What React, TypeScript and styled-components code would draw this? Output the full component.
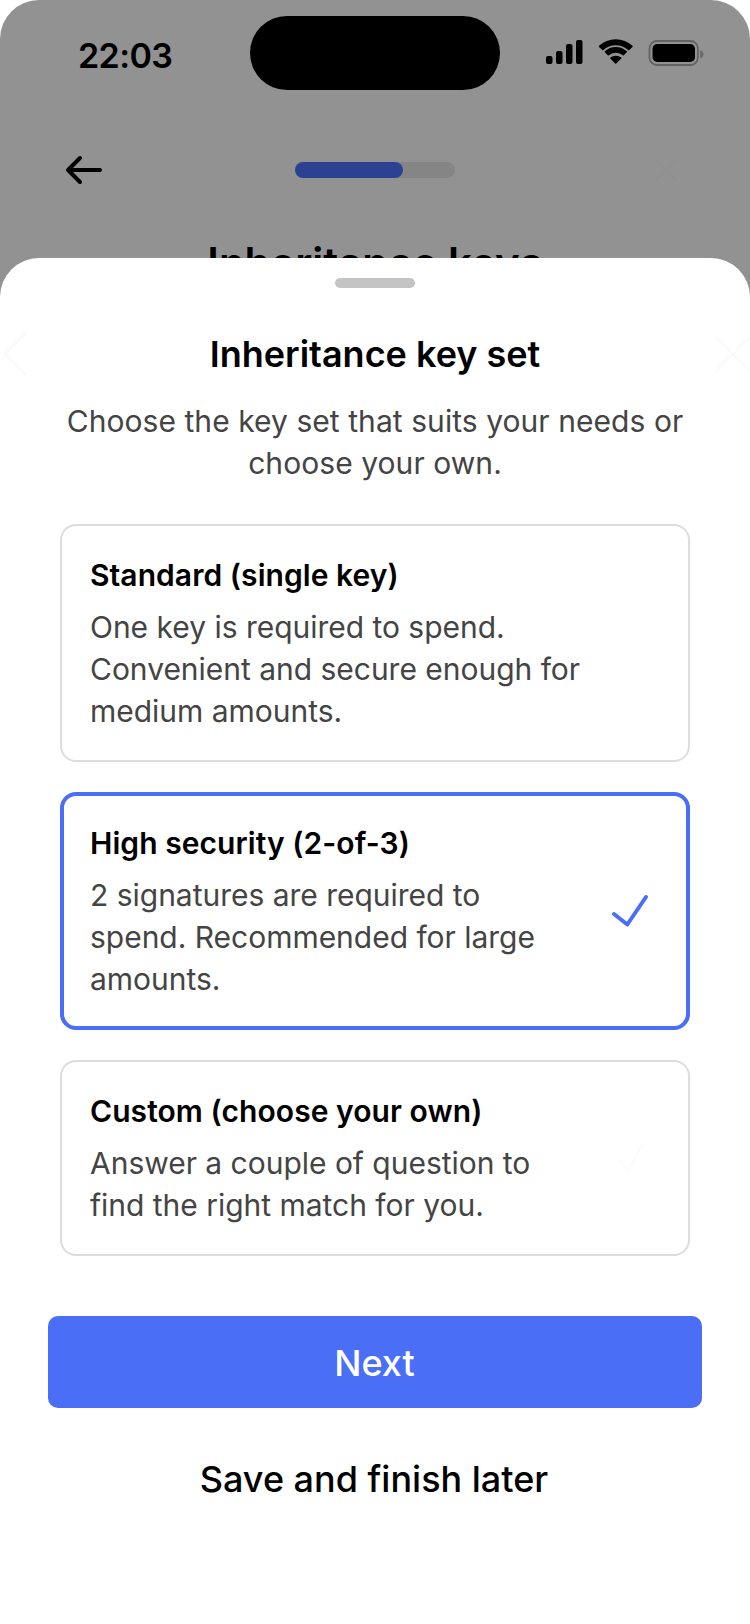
import React from 'react';
import styled, { createGlobalStyle } from 'styled-components';

const GlobalStyle = createGlobalStyle`
  *, *::before, *::after { box-sizing: border-box; }
  body { margin: 0; background: #ffffff; }
`;

const Phone = styled.div`
  position: relative;
  width: 750px;
  height: 1624px;
  overflow: hidden;
  font-family: Inter, 'Liberation Sans', sans-serif;
  color: #000000;
  background: #ffffff;
`;

const Backdrop = styled.div`
  display: flex;
  flex-direction: column;
  height: 320px;
  border-radius: 39px 39px 0 0;
  background: #929292;
`;

const StatusBar = styled.header`
  display: grid;
  grid-template-columns: 250px 250px 250px;
  height: 106px;
  padding-top: 16px;
`;

const Clock = styled.time`
  padding: 19px 0 0 78px;
  font-size: 34px;
  font-weight: 600;
  line-height: 42px;
  letter-spacing: -0.6px;
`;

const Island = styled.div`
  height: 74px;
  border-radius: 37px;
  background: #000000;
`;

const StatusIcons = styled.div`
  display: flex;
  padding: 22px 0 0 44px;
`;

const NavBar = styled.nav`
  display: grid;
  grid-template-columns: 295px 160px 295px;
  align-items: center;
  height: 128px;
`;

const BackButton = styled.button`
  display: flex;
  width: 48px;
  height: 48px;
  margin-left: 60px;
  padding: 0;
  border: 0;
  background: none;
`;

const CloseButton = styled(BackButton)`
  margin-left: 187px;
`;

const Progress = styled.div`
  height: 16px;
  border-radius: 8px;
  background: #858585;
`;

const ProgressFill = styled.div`
  width: 108px;
  height: 100%;
  border-radius: 8px;
  background: #2c4192;
`;

const PageTitle = styled.h1`
  margin: 4px 0 0;
  font-size: 42px;
  font-weight: 600;
  line-height: 50px;
  text-align: center;
  white-space: nowrap;
`;

const Sheet = styled.section`
  position: absolute;
  top: 258px;
  left: 0;
  right: 0;
  bottom: 0;
  display: flex;
  flex-direction: column;
  align-items: center;
  padding-top: 20px;
  border-radius: 39px 39px 0 0;
  background: #ffffff;
`;

const Handle = styled.div`
  width: 80px;
  height: 10px;
  border-radius: 5px;
  background: #c4c4c4;
`;

const SheetHeader = styled.div`
  display: flex;
  align-items: center;
  justify-content: space-between;
  width: 100%;
  height: 48px;
  margin-top: 42px;
`;

const SheetTitle = styled.h2`
  margin: 0;
  font-size: 36px;
  font-weight: 600;
  line-height: 44px;
  white-space: nowrap;
`;

const Intro = styled.p`
  width: 640px;
  margin: 22px 0 0;
  color: #444444;
  font-size: 30px;
  line-height: 42px;
  letter-spacing: 0.06px;
  text-align: center;
`;

const Options = styled.div`
  display: flex;
  flex-direction: column;
  gap: 30px;
  width: 630px;
  margin-top: 40px;
`;

const OptionCard = styled.article<{ $selected?: boolean; $short?: boolean }>`
  display: flex;
  align-items: center;
  justify-content: space-between;
  height: ${({ $short }) => ($short ? 196 : 238)}px;
  padding: ${({ $selected }) => ($selected ? '0 32px 0 26px' : '0 34px 0 28px')};
  border: ${({ $selected }) => ($selected ? '4px solid #4a6ff6' : '2px solid #dddddd')};
  border-radius: 16px;
`;

const OptionTitle = styled.h3`
  margin: 0 0 10px;
  font-size: 30px;
  font-weight: 600;
  line-height: 42px;
  letter-spacing: 0.06px;
`;

const OptionText = styled.p`
  margin: 0;
  color: #444444;
  font-size: 30px;
  line-height: 42px;
  letter-spacing: -0.02px;
  white-space: pre-line;
`;

const PrimaryButton = styled.button`
  width: 654px;
  height: 92px;
  margin-top: 60px;
  padding: 1px 1px 0 0;
  border: 0;
  border-radius: 10px;
  background: #4a6ff6;
  color: #ffffff;
  font: 500 36px/44px Inter, 'Liberation Sans', sans-serif;
`;

const TextButton = styled(PrimaryButton)`
  height: 72px;
  margin-top: 34px;
  padding-right: 2px;
  background: none;
  color: #000000;
`;

const SignalIcon = () => (
  <svg width="42" height="28" viewBox="544 38 42 28">
    <rect x="546" y="56" width="6.5" height="8" rx="2" />
    <rect x="556" y="51" width="6.5" height="13" rx="2" />
    <rect x="566" y="44" width="6.5" height="20" rx="2" />
    <rect x="576" y="40" width="6.5" height="24" rx="2" />
  </svg>
);

const WifiIcon = () => (
  <svg width="60" height="28" viewBox="586 38 60 28">
    <path d="M615.8 45.2c4.8 0 9.1 1.8 12.4 4.8.3.3.7.3 1 0l3.3-3.1c.3-.3.3-.8 0-1.1A24.5 24.5 0 0 0 599 45.8c-.3.3-.3.8 0 1.1l3.3 3.1c.3.3.7.3 1 0a18.3 18.3 0 0 1 12.5-4.8z" />
    <path d="M615.8 52.7c2.7 0 5.1 1 7 2.6.3.3.8.3 1 0l3-3c.3-.3.3-.8 0-1.1a16.3 16.3 0 0 0-22 0c-.3.3-.3.8 0 1.1l3 3c.3.3.7.3 1 0a10.7 10.7 0 0 1 7-2.6z" />
    <path d="M621.3 58.6c.3-.3.3-.8 0-1a8.7 8.7 0 0 0-11 0c-.3.3-.3.7 0 1l4.9 4.9c.3.3.8.3 1.1 0z" />
  </svg>
);

const BatteryIcon = () => (
  <svg width="60" height="30" viewBox="646 38 60 30">
    <rect x="649.5" y="41" width="48.4" height="24" rx="7.5" fill="none" stroke="#626262" strokeWidth="1.8" />
    <rect x="652.5" y="44" width="42.5" height="18" rx="4.8" />
    <path d="M700.2 50v8.5c1.9-.8 3.3-2.300 3.3-4.200s-1.400-3.500-3.300-4.300z" fill="#696969" />
  </svg>
);

const ArrowIcon = () => (
  <svg width="48" height="48" fill="none" stroke="#000" strokeWidth="4" strokeLinecap="round" strokeLinejoin="round">
    <path d="M40 24H8M20 12L8 24l12 12" />
  </svg>
);

const CheckIcon = () => (
  <svg width="48" height="48" fill="none" stroke="#4a6ff6" strokeWidth="4" strokeLinecap="round" strokeLinejoin="round">
    <path d="M8 27L21.3 37.500L40 10" />
  </svg>
);

const FaintCheckIcon = () => (
  <svg width="48" height="48" fill="none" stroke="#fbfbfb" strokeWidth="2">
    <path d="M11 25L22 35L37 10" />
  </svg>
);

export default function App() {
  return (
    <>
      <GlobalStyle />
      <Phone>
        <Backdrop>
          <StatusBar>
            <Clock>22:03</Clock>
            <Island />
            <StatusIcons>
              <SignalIcon />
              <WifiIcon />
              <BatteryIcon />
            </StatusIcons>
          </StatusBar>
          <NavBar>
            <BackButton aria-label="Back">
              <ArrowIcon />
            </BackButton>
            <Progress>
              <ProgressFill />
            </Progress>
            <CloseButton aria-label="Close">
              <svg width="48" height="48" stroke="#909090" strokeWidth="2">
                <path d="M13 13l22 22M35 13L13 35" />
              </svg>
            </CloseButton>
          </NavBar>
          <PageTitle>Inheritance keys</PageTitle>
        </Backdrop>

        <Sheet>
          <Handle />
          <SheetHeader>
            <svg width="38" height="48" fill="none" stroke="#fafafa" strokeWidth="2">
              <path d="M26 3L5 24l21 21" />
            </svg>
            <SheetTitle>Inheritance key set</SheetTitle>
            <svg width="38" height="48" fill="none" stroke="#fafafa" strokeWidth="2">
              <path d="M3 6l36 36M39 6L3 42" />
            </svg>
          </SheetHeader>
          <Intro>Choose the key set that suits your needs or choose your own.</Intro>
          <Options>
            <OptionCard>
              <div>
                <OptionTitle>Standard (single key)</OptionTitle>
                <OptionText>{'One key is required to spend.\nConvenient and secure enough for\nmedium amounts.'}</OptionText>
              </div>
            </OptionCard>
            <OptionCard $selected>
              <div>
                <OptionTitle>High security (2-of-3)</OptionTitle>
                <OptionText>{'2 signatures are required to\nspend. Recommended for large\namounts.'}</OptionText>
              </div>
              <CheckIcon />
            </OptionCard>
            <OptionCard $short>
              <div>
                <OptionTitle>Custom (choose your own)</OptionTitle>
                <OptionText>{'Answer a couple of question to\nfind the right match for you.'}</OptionText>
              </div>
              <FaintCheckIcon />
            </OptionCard>
          </Options>
          <PrimaryButton>Next</PrimaryButton>
          <TextButton>Save and finish later</TextButton>
        </Sheet>
      </Phone>
    </>
  );
}
